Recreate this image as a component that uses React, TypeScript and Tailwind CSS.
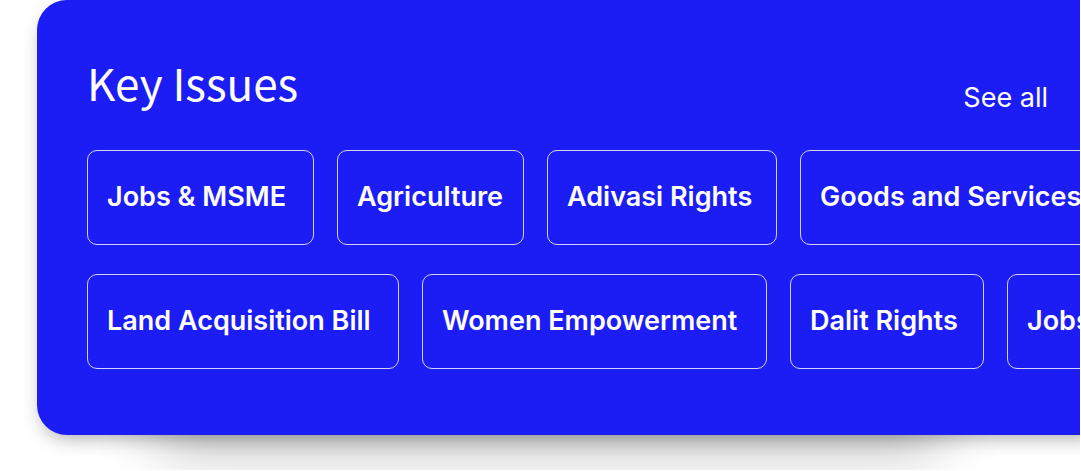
type Issue = { label: string; width: string };

const rows: Issue[][] = [
  [
    { label: 'Jobs & MSME', width: 'w-[227px]' },
    { label: 'Agriculture', width: 'w-[187px]' },
    { label: 'Adivasi Rights', width: 'w-[230px]' },
    { label: 'Goods and Services', width: 'w-[312px]' },
  ],
  [
    { label: 'Land Acquisition Bill', width: 'w-[312px]' },
    { label: 'Women Empowerment', width: 'w-[345px]' },
    { label: 'Dalit Rights', width: 'w-[194px]' },
    { label: 'Jobs', width: 'w-[227px]' },
  ],
];

function IssueRow({ issues }: { issues: Issue[] }) {
  return (
    <ul className="flex gap-[23px]">
      {issues.map((issue) => (
        <li key={issue.label} className="shrink-0">
          <a
            href="#"
            className={`flex h-[95px] items-center whitespace-nowrap rounded-[10px] border border-white/80 pb-0.5 pl-[19px] text-[27px] leading-9 font-semibold ${issue.width}`}
          >
            {issue.label}
          </a>
        </li>
      ))}
    </ul>
  );
}

export default function App() {
  return (
    <main className="bg-white pr-px pb-px font-['Inter',sans-serif]">
      <div className="overflow-hidden pb-[35px] pl-[37px]">
        <div className="relative isolate">
          <div className="absolute inset-y-0 right-[13%] left-[11%] -z-10 rounded-[30px] shadow-[0_12px_60px_0_rgba(0,0,0,0.28)]" />
          <section className="-mr-5 rounded-l-[30px] bg-[#1c1cf5] pt-[53px] pr-5 pb-[66px] pl-[50px] text-white shadow-[0_8px_20px_-6px_rgba(0,0,0,0.36)]">
            <header className="mb-[34px] flex items-end justify-between pr-8">
              <h1 className="pb-[5px] font-['Noto_Sans_CJK_SC',sans-serif] text-[44px] leading-[58px] font-normal">
                Key Issues
              </h1>
              <a href="#" className="text-[27px] leading-9 font-normal">
                See all
              </a>
            </header>
            <div className="flex flex-col gap-[29px] overflow-hidden">
              {rows.map((issues, index) => (
                <IssueRow key={index} issues={issues} />
              ))}
            </div>
          </section>
        </div>
      </div>
    </main>
  );
}
